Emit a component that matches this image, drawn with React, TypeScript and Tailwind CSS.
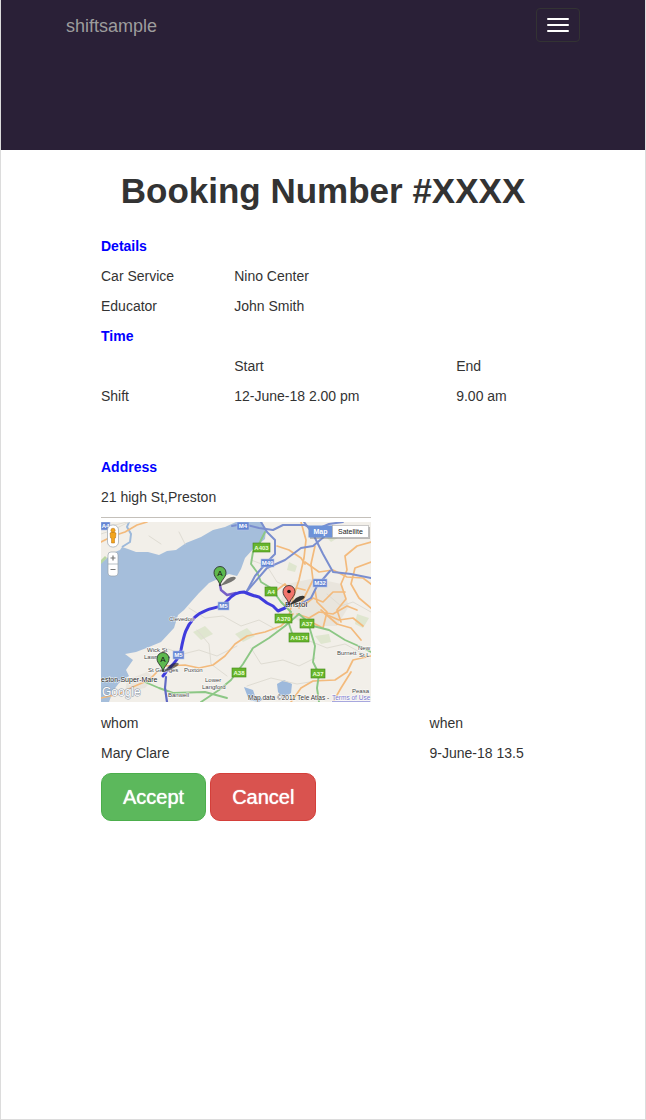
import React from "react";

const minorRoads = [
  "M0 5 L14 3 L30 -1 M0 12 L12 8 L28 0",
  "M48 14 L60 22 M78 10 L84 22",
  "M88 86 L104 96 L122 94 L140 104 L158 98 L176 108",
  "M64 126 L82 132 L98 128 L116 134 L136 124",
  "M96 108 L108 122 L110 142 L126 154",
  "M150 126 L160 142 L182 138 L198 144 L214 136",
  "M146 164 L170 156 L196 162 L222 158",
  "M206 118 L226 126 L244 122 L266 134",
  "M226 72 L240 84 L252 80 L270 90",
  "M150 38 L166 44 L176 60 L190 66",
];

const orangeRoads = [
  "M0 20 L12 14 L24 10 L36 3 L46 0",
  "M64 144 L84 143 L98 146 L112 143 L124 134 L134 122 L146 114 L164 110 L180 104 L192 92",
  "M0 176 L18 172 L34 164 L48 158 L56 150",
  "M190 180 L200 166 L212 159 L234 158 L246 150 L252 138 L270 134",
  "M232 180 L240 166 L250 150",
  "M200 0 L205 18 L203 36 L198 58 L192 76 L188 94",
  "M214 24 L210 42 L212 58 L205 72 L198 86",
  "M176 24 L188 28 L200 36 L204 42",
  "M204 40 L218 50 L232 48 L246 55 L262 56 L270 62",
  "M270 20 L256 24 L244 34 L246 48 L240 62 L245 77 L236 88 L240 100",
  "M270 40 L254 46 L250 62 L258 76 L270 86",
  "M196 92 L208 96 L218 90 L232 92 L246 84 L256 88",
  "M202 84 L212 76 L222 80 L232 70 L244 70",
  "M206 98 L222 106 L226 90 L216 80 L214 68",
  "M220 88 L236 102 L250 106 L260 118",
  "M224 92 L238 98 L252 96 L262 104",
  "M176 68 L184 62 L190 70 L196 66 L204 68",
];

const greenRoads = [
  "M164 10 L158 22 L152 30 L150 42 L156 50 L160 60 L170 66 L180 80 L190 90",
  "M198 92 L184 104 L168 116 L152 126 L142 142 L130 158 L118 168 L100 180",
  "M198 92 L212 104 L228 108 L244 118 L262 126 L270 130",
  "M208 104 L214 124 L212 140 L218 152 L216 166 L218 180",
  "M188 102 L192 114",
  "M44 160 L58 166 L72 171 L104 170 L126 176",
];

const motorways = [
  "M131 4 L142 2 L158 6 L172 8 L182 3 L204 3 L214 8 L228 2 L242 0",
  "M160 0 L166 10 L174 18 L174 32 L166 40 L154 54 L146 69",
  "M146 69 L166 46 L184 38 L200 26 L212 24 L224 14",
  "M203 0 L212 12 L222 32 L232 50 L250 52 L270 56",
  "M229 49 L216 64 L210 76 L196 84",
];

const greenTags = [
  { x: 160, y: 25, w: 17, t: "A403" },
  { x: 172, y: 69, w: 12, t: "A4" },
  { x: 182, y: 96, w: 17, t: "A370" },
  { x: 207, y: 101, w: 14, t: "A37" },
  { x: 196, y: 115, w: 20, t: "A4174" },
  { x: 139, y: 150, w: 14, t: "A38" },
  { x: 218, y: 151, w: 14, t: "A37" },
];

const blueTags = [
  { x: 6, y: 4, w: 9, t: "A4" },
  { x: 142, y: 4, w: 12, t: "M4" },
  { x: 166, y: 41, w: 13, t: "M49" },
  { x: 218, y: 61, w: 14, t: "M32" },
  { x: 123, y: 84, w: 11, t: "M5" },
  { x: 78, y: 133, w: 11, t: "M5" },
];

const places = [
  { x: 68, y: 99, s: 6, t: "Clevedon" },
  { x: 46, y: 130, s: 6, t: "Wick St" },
  { x: 43, y: 137, s: 6, t: "Lawrence" },
  { x: 47, y: 150, s: 6, t: "St Georges" },
  { x: 83, y: 150, s: 6, t: "Puxton" },
  { x: 104, y: 160, s: 6, t: "Lower" },
  { x: 101, y: 167, s: 6, t: "Langford" },
  { x: 67, y: 175, s: 6, t: "Banwell" },
  { x: 236, y: 133, s: 6, t: "Burnett" },
  { x: 257, y: 128, s: 6, t: "New" },
  { x: 258, y: 135, s: 6, t: "St L" },
  { x: 251, y: 171, s: 6, t: "Peasa" },
];

function Pin({ x, y, fill, label }: { x: number; y: number; fill: string; label?: string }) {
  return (
    <g transform={`translate(${x} ${y})`}>
      <path d="M0 0 L7 -7 Q14 -11 16 -8 Q14 -4 0 0Z" fill="#222" opacity={label ? "0.6" : "0.9"} />
      <path
        d="M0 0 C-0.6 -6 -6 -8 -6 -13.5 A6 6 0 1 1 6 -13.5 C6 -8 0.6 -6 0 0Z"
        fill={fill}
        stroke="#222"
        strokeWidth="0.8"
      />
      {label ? (
        <text x="0" y="-10.5" fontSize="8" textAnchor="middle" fill="#111">
          {label}
        </text>
      ) : (
        <circle cx="0" cy="-13.5" r="1.8" fill="#111" />
      )}
    </g>
  );
}

function RouteMap() {
  return (
    <svg
      viewBox="0 0 270 180"
      role="img"
      aria-label="Route map"
      className="block w-[270px] max-w-full"
      fontFamily="'Liberation Sans', Arial, sans-serif"
    >
      <rect width="270" height="180" fill="#f2efe9" />
      <g fill="#dfe6cf">
        <path d="M222 12 L232 8 L240 14 L230 20Z M256 92 L268 96 L262 106 L254 102Z" />
        <path d="M134 112 L146 106 L154 114 L142 120Z M92 110 L104 104 L112 112 L100 118Z" />
        <path d="M188 40 L196 44 L194 50 L186 48Z M214 114 L228 112 L230 120 L220 122Z" />
      </g>
      <g fill="#e9e5dd">
        <path d="M186 62 L214 56 L240 62 L248 84 L236 104 L206 104 L190 94 L180 78Z" />
        <path d="M26 158 L46 150 L54 156 L44 166 L24 170Z" />
      </g>
      <path
        d="M0 41 L6 36 L14 30 L19 28 L21 25 L27 27 L35 30 L47 30 L58 33 L66 29 L75 28 L85 21 L100 15 L112 8 L124 5 L135 0 L161 0 L165 8 L164 17 L153 26 L144 36 L140 47 L136 54 L128 52 L119 56 L108 61 L98 71 L90 80 L83 88 L77 93 L73 106 L60 120 L48 125 L35 130 L24 132 L32 138 L25 148 L28 154 L18 161 L12 169 L8 180 L0 180Z"
        fill="#a5bedb"
      />
      <path d="M21 25 L29 20 L30 12 L26 5 L28 0" fill="none" stroke="#9db9da" strokeWidth="2" />
      <path
        d="M143 165 L152 168 L154 174 L162 177 L158 180 L148 178Z M176 162 L183 158 L191 162 L190 171 L182 176 L177 170Z"
        fill="#9db9dc"
      />
      <path d="M0 38 L4 34 L6 36 L0 42Z" fill="#b9d7a2" />

      <g fill="none" strokeLinejoin="round" strokeLinecap="round">
        {minorRoads.map((d) => (
          <path key={d} d={d} stroke="#dfdcd3" strokeWidth="1" />
        ))}
        {orangeRoads.map((d) => (
          <path key={d} d={d} stroke="#f3ba7c" strokeWidth="1.7" />
        ))}
        {greenRoads.map((d) => (
          <path key={d} d={d} stroke="#8cc785" strokeWidth="1.9" />
        ))}
        {motorways.map((d) => (
          <path key={d} d={d} stroke="#7a8ecf" strokeWidth="2" />
        ))}
        <path d="M65 155 L64 166 L66 180" stroke="#6069c4" strokeWidth="2.2" />
        <path d="M119 63 L120 68 L126 73 L135 71" stroke="#765fc6" strokeWidth="2.4" />
        <path
          d="M62 154 C70 143 77 140 80 128 C83 112 85 105 93 96 C101 88 112 86 121 84 L127 78 C132 72 138 70 143 70 C148 72 153 74 158 75 L166 81 L172 84 L177 89 L184 86 L188 80"
          stroke="#403cdd"
          strokeWidth="3"
        />
      </g>

      {greenTags.map((g) => (
        <g key={`${g.t}-${g.x}`} transform={`translate(${g.x - 8} ${g.y - 4})`}>
          <rect width={g.w} height="9" fill="#67b52d" stroke="#418518" strokeWidth="0.6" />
          <text x={g.w / 2} y="7" fontSize="6" fontWeight="bold" textAnchor="middle" fill="#edffd9">
            {g.t}
          </text>
        </g>
      ))}
      {blueTags.map((b) => (
        <g key={`${b.t}-${b.x}`} transform={`translate(${b.x - 6} ${b.y - 4})`}>
          <rect width={b.w} height="8" fill="#6484d2" stroke="#b2c1e9" strokeWidth="0.6" />
          <text x={b.w / 2} y="6" fontSize="6" fontWeight="bold" textAnchor="middle" fill="#fff">
            {b.t}
          </text>
        </g>
      ))}

      <g fill="#444" stroke="#fff" strokeWidth="0.8" paintOrder="stroke">
        {places.map((p) => (
          <text key={p.t} x={p.x} y={p.y} fontSize={p.s}>
            {p.t}
          </text>
        ))}
        <text x="0" y="160" fontSize="7" fill="#222">
          eston-Super-Mare
        </text>
        <text x="184" y="85" fontSize="8" fill="#111">
          Bristol
        </text>
        <text x="147" y="178" fontSize="6.5" fill="#333">
          Map data ©2011 Tele Atlas -
        </text>
        <text x="231" y="178" fontSize="6.5" fill="#7777cc" textDecoration="underline">
          Terms of Use
        </text>
      </g>
      <text x="1" y="174" fontSize="12" fill="#fff" stroke="#8a97a8" strokeWidth="0.9" paintOrder="stroke">
        Google
      </text>

      <Pin x={119} y={64} fill="#5eb84f" label="A" />
      <Pin x={62} y={150} fill="#5eb84f" label="A" />
      <Pin x={188} y={83} fill="#f1746b" />

      <g stroke="#9aa3ad" strokeWidth="0.7" fill="#fff">
        <rect x="6.5" y="3" width="11" height="22" rx="5" />
        <rect x="7" y="30" width="10" height="24" rx="3" />
        <path d="M7 42 L17 42" />
      </g>
      <g fill="#f3a51c" stroke="#b56d0c" strokeWidth="0.5">
        <path d="M9 11 Q12 9 15 11 L14.5 16 L13.5 16 L13.5 21 L10.5 21 L10.5 16 L9.5 16Z" />
        <circle cx="12" cy="8.3" r="2.1" />
      </g>
      <path d="M9.5 36 L14.5 36 M12 33.5 L12 38.5 M9.5 47.5 L14.5 47.5" stroke="#777" strokeWidth="1.2" />

      <rect x="209" y="5" width="60" height="12" fill="#777" opacity="0.45" />
      <rect x="207.5" y="3.5" width="24" height="12" fill="#6d92d8" />
      <rect x="231.5" y="3.5" width="36" height="12" fill="#fff" stroke="#aaa" strokeWidth="0.6" />
      <text x="219.5" y="12" fontSize="7" fontWeight="bold" textAnchor="middle" fill="#fff">
        Map
      </text>
      <text x="249.5" y="12" fontSize="7" textAnchor="middle" fill="#222">
        Satellite
      </text>
    </svg>
  );
}

const sectionTitle = "text-left font-bold text-[#0000ff]";

export default function App() {
  return (
    <div className="min-h-screen border-x border-b border-[#dcdcdc] bg-white font-['Liberation_Sans',Arial,sans-serif] text-sm text-[#333]">
      <header className="h-[150px] bg-[#2a2037] px-[65px] pt-2">
        <nav className="flex items-center justify-between">
          <a href="#" className="pt-0.5 text-lg leading-5 text-[#9d9d9d]">
            shiftsample
          </a>
          <button
            type="button"
            aria-label="Toggle navigation"
            className="flex h-[34px] w-11 flex-col items-center justify-center gap-1 rounded border border-[#333]"
          >
            <span className="h-0.5 w-[22px] rounded-[1px] bg-white" />
            <span className="h-0.5 w-[22px] rounded-[1px] bg-white" />
            <span className="h-0.5 w-[22px] rounded-[1px] bg-white" />
          </button>
        </nav>
      </header>

      <main className="px-[100px] pt-5">
        <h1 className="text-center text-[35px] leading-[42px] font-bold whitespace-nowrap">Booking Number #XXXX</h1>

        <table className="mt-[19px] w-full table-fixed [&_tr]:h-[30px]">
          <colgroup>
            <col className="w-[30%]" />
            <col className="w-[50%]" />
            <col className="w-[20%]" />
          </colgroup>
          <tbody>
            <tr>
              <th colSpan={3} className={sectionTitle}>
                Details
              </th>
            </tr>
            <tr>
              <td>Car Service</td>
              <td>Nino Center</td>
              <td />
            </tr>
            <tr>
              <td>Educator</td>
              <td>John Smith</td>
              <td />
            </tr>
            <tr>
              <th colSpan={3} className={sectionTitle}>
                Time
              </th>
            </tr>
            <tr>
              <td />
              <td>Start</td>
              <td>End</td>
            </tr>
            <tr>
              <td>Shift</td>
              <td>12-June-18 2.00 pm</td>
              <td>9.00 am</td>
            </tr>
          </tbody>
        </table>

        <section className="mt-[41px]">
          <h2 className="leading-[30px] font-bold text-[#0000ff]">Address</h2>
          <p className="leading-[30px]">21 high St,Preston</p>
          <hr className="mt-[5px] mb-1 w-[270px] border-[#c4c0ba]" />
          <RouteMap />
        </section>

        <table className="mt-1.5 w-full table-fixed [&_tr]:h-[30px]">
          <colgroup>
            <col className="w-[74%]" />
            <col />
          </colgroup>
          <tbody>
            <tr>
              <td>whom</td>
              <td>when</td>
            </tr>
            <tr>
              <td>Mary Clare</td>
              <td className="whitespace-nowrap">9-June-18 13.5</td>
            </tr>
          </tbody>
        </table>

        <div className="mt-[5px] flex gap-1">
          <button
            type="button"
            className="h-12 rounded-[10px] border border-[#4cae4c] bg-[#5cb85c] px-[21px] text-xl text-white text-shadow-[0_0_1px_#fff]"
          >
            Accept
          </button>
          <button
            type="button"
            className="h-12 rounded-[10px] border border-[#d43f3a] bg-[#d9534f] px-[21px] text-xl text-white text-shadow-[0_0_1px_#fff]"
          >
            Cancel
          </button>
        </div>
      </main>
    </div>
  );
}
